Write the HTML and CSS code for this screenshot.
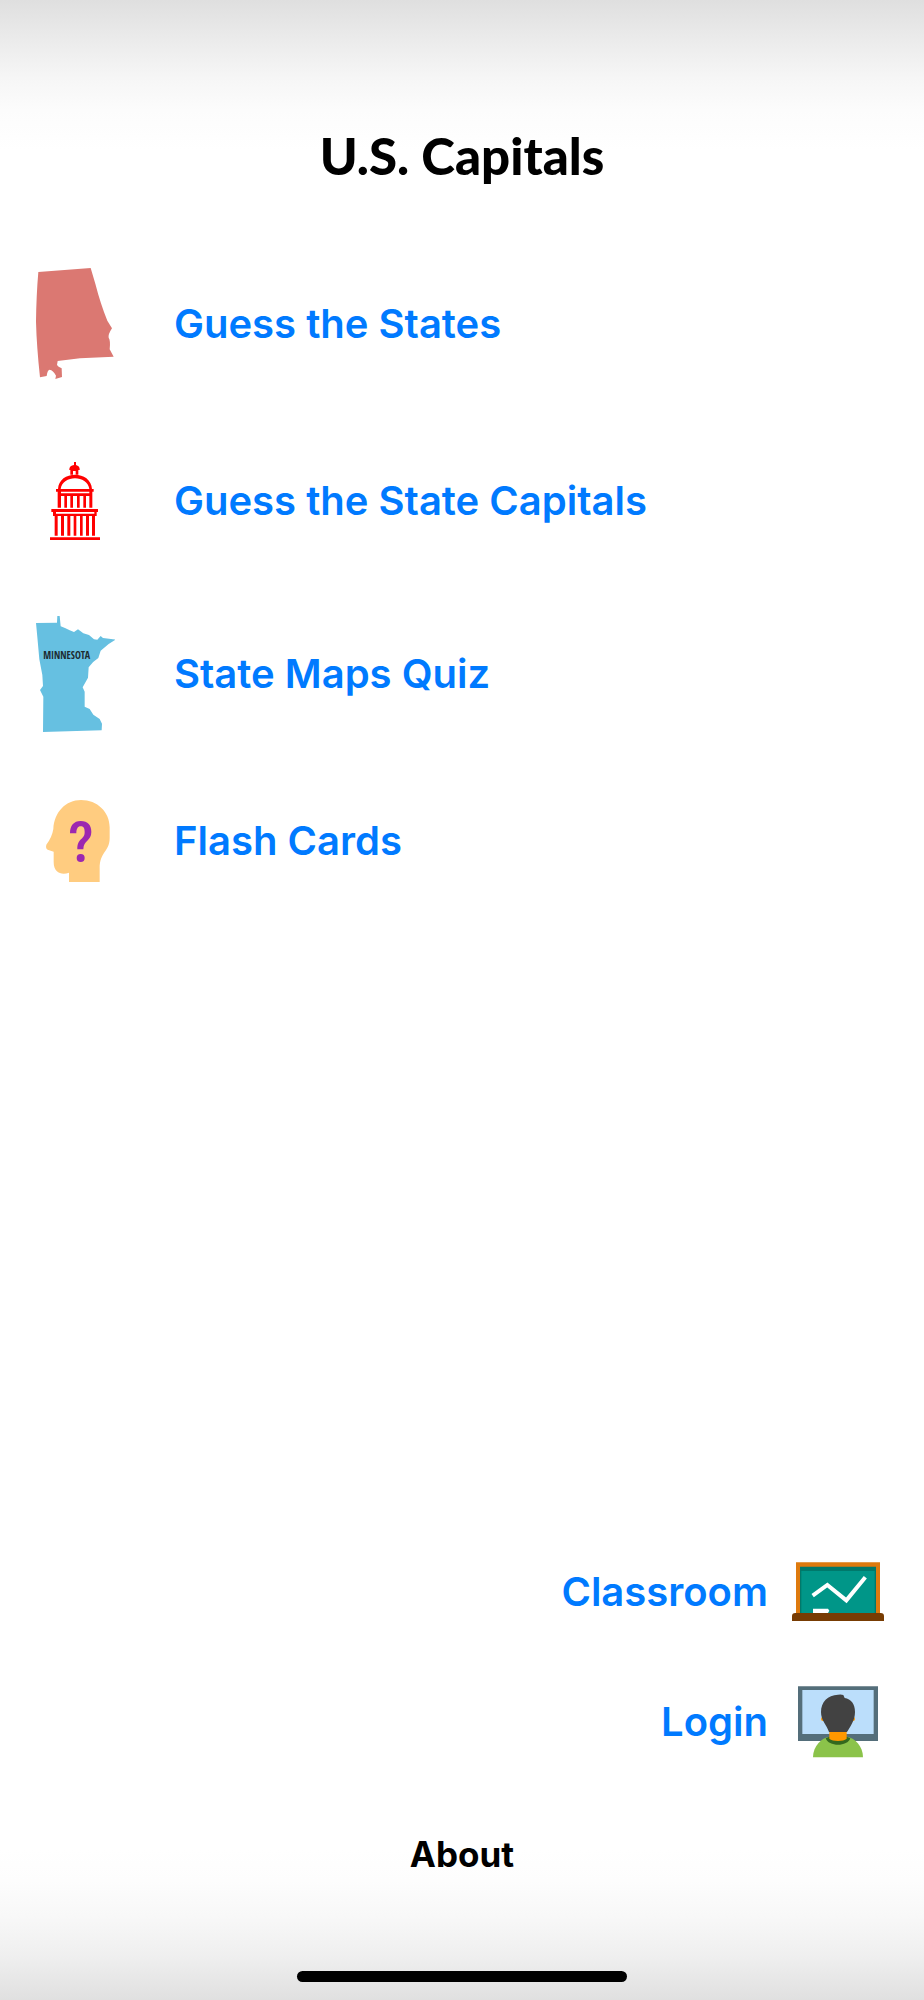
FILE: index.html
```html
<!DOCTYPE html>
<html lang="en">
<head>
<meta charset="utf-8">
<meta name="viewport" content="width=device-width, initial-scale=1">
<title>U.S. Capitals</title>
<link rel="stylesheet" href="styles.css">
</head>
<body>
<div class="screen">
  <h1 class="title">U.S. Capitals</h1>

  <nav class="games" aria-label="Games">
    <a class="game" href="#states">
      <svg class="icon" width="80" height="126" viewBox="45 33 240 378" aria-hidden="true">
        <path fill="#db7872" d="M55 66L212 54L226 101Q242 163 262 212L276 235Q264 253 266 263Q272 272 269 298L281 320L180 325L113 333L111 345Q114 351 125 355L126 381L106 387L108 377Q99 360 89 359Q82 360 80 378L60 382Q50 290 48 215Q49 135 55 66Z"/>
      </svg>
      <span>Guess the States</span>
    </a>
    <a class="game" href="#capitals">
      <svg class="icon" width="80" height="120" viewBox="15 -27 240 360" aria-hidden="true">
        <g fill="#f00">
          <path d="M132 36h6v9q11 3 11 12v3h-4v14h-8v-11h-8v11h-8V60h-3v-3q1-10 14-12z"/>
          <path fill-rule="evenodd" d="M84 118C86 60 184 60 186 118ZM92 117H178C172 74 98 74 92 117Z"/>
          <path d="M78 117h113v8h-4v48h-9v-35h-10v35h-8v-35h-11v35h-8v-35h-12v35h-8v-35h-10v35h-8v-35H93v35H83v-48h-5zM93 125v5h85v-5z" fill-rule="evenodd"/>
          <path d="M64 177h140v9h-4v12h-5v59h-9v-59h-9v59h-9v-59h-10v59h-8v-59h-11v59h-8v-59h-10v59h-9v-59h-10v59h-9v-59h-10v59h-9v-59h-5v-12h-5zM78 186v5h115v-5z" fill-rule="evenodd"/>
          <path d="M60 262h150v8H60z"/>
        </g>
      </svg>
      <span>Guess the State Capitals</span>
    </a>
    <a class="game" href="#maps">
      <svg class="icon" width="80" height="118" viewBox="45 45 240 354" aria-hidden="true">
        <path fill="#66c0e1" d="M48 69L111 68L112 48H119L122 79L135 84L149 91L162 96L174 88L190 100L207 105L222 118L232 119L242 108L249 114L287 119Q265 130 242 152L235 174Q216 186 206 202L204 233L188 262L194 275L194 320L209 327L220 344L239 357L246 371L245 391L69 396L70 290L60 270L69 258L67 225L58 178Q52 110 48 69Z"/>
        <text class="map-label" x="140" y="176" text-anchor="middle">MINNESOTA</text>
      </svg>
      <span>State Maps Quiz</span>
    </a>
    <a class="game" href="#cards">
      <svg class="icon" width="80" height="108" viewBox="15 -9 240 324" aria-hidden="true">
        <path fill="#ffcc80" d="M153 30C202 30 239 66 239 112V144C239 185 209 185 209 235V276H117V248C97 256 71 250 71 216V185L53 179Q46 175 49 164Q66 142 70 117C73 66 107 30 153 30Z"/>
        <path fill="#9c27b0" d="M120 130C120 107 131 93 152 93C174 93 184 106 184 126C184 153 160 151 160 178H142C142 142 164 151 164 126C164 114 160 109 152 109C143 109 139 117 139 130Z"/>
        <circle cx="152" cy="204" r="12" fill="#9c27b0"/>
      </svg>
      <span>Flash Cards</span>
    </a>
  </nav>

  <nav class="account" aria-label="Account">
    <a class="account-link" href="#classroom">
      <span>Classroom</span>
      <svg class="icon" width="96" height="64" viewBox="30 30 288 192" aria-hidden="true">
        <path fill="#de7a0e" d="M48 37H300V192H48Z"/>
        <path fill="#00796b" d="M60 50H288V190H60Z"/>
        <path fill="#009688" d="M64 63H284V190H64Z"/>
        <path fill="none" stroke="#fff" stroke-width="12" d="M98 137L142 105L199 151L256 82"/>
        <path fill="#fff" d="M99 176H144L148 182L144 189H99Z"/>
        <path fill="#783c03" d="M36 213V198Q36 189 46 189H302Q312 189 312 198V213Z"/>
      </svg>
    </a>
    <a class="account-link" href="#login">
      <span>Login</span>
      <svg class="icon" width="96" height="80" viewBox="30 36 288 240" aria-hidden="true">
        <path fill="#546e7a" d="M54 49H294V213H54Z"/>
        <path fill="#bbdefb" d="M67 60H281V192H67Z"/>
        <path fill="#8bc34a" d="M99 262C99 228 125 203 148 200H200C224 203 249 228 249 262Z"/>
        <path fill="#33691e" d="M137 205L148 200H200L211 205C203 231 145 231 137 205Z"/>
        <path fill="#ff9800" d="M148 184H200V206C190 215 158 215 148 206Z"/>
        <circle cx="129" cy="147" r="6" fill="#ff9800"/>
        <circle cx="219" cy="147" r="6" fill="#ff9800"/>
        <path fill="#424242" d="M174 74Q186 73 190 75L194 84C213 87 225 101 225 126C225 151 211 170 201 186H147C140 165 123 151 123 126C123 96 143 75 174 74Z"/>
      </svg>
    </a>
  </nav>

  <footer class="footer">
    <a class="about" href="#about">About</a>
    <div class="home-indicator"></div>
  </footer>
</div>
</body>
</html>
```
FILE: styles.css
```css
* {
  box-sizing: border-box;
}

body {
  margin: 0;
  font-family: Inter, "Liberation Sans", sans-serif;
  font-weight: 600;
  background: #fff;
}

a {
  color: #007aff;
  text-decoration: none;
}

.screen {
  min-height: 100vh;
  display: flex;
  flex-direction: column;
  padding: 120px 35px 18px;
  background:
    linear-gradient(to bottom, #dfdfdf 0, #ebebeb 40px, #f6f6f6 78px, #fcfcfc 110px, #fff 150px, transparent 150px),
    linear-gradient(to top, #e0e0e0 0, #efefef 44px, #f8f8f8 84px, #fdfdfd 120px, #fff 150px);
}

.title {
  margin: 0;
  font-family: Lato, "Open Sans", sans-serif;
  font-size: 51px;
  font-weight: 900;
  line-height: 72px;
  text-align: center;
  color: #000;
}

.games {
  display: flex;
  flex-direction: column;
  align-items: flex-start;
  gap: 54px;
  margin-top: 69px;
}

.game {
  display: flex;
  align-items: center;
  gap: 59px;
  font-size: 40px;
  line-height: 48px;
}

.icon {
  display: block;
  flex: none;
}

.map-label {
  font-family: "Open Sans Condensed", "DejaVu Sans Condensed", sans-serif;
  font-size: 30px;
  font-weight: 400;
  fill: #1c2b31;
}

.account {
  display: flex;
  flex-direction: column;
  align-items: flex-end;
  gap: 58px;
  margin-top: auto;
  padding-right: 3px;
}

.account-link {
  display: flex;
  align-items: center;
  gap: 22px;
  font-size: 40px;
  line-height: 48px;
}

.footer {
  display: flex;
  flex-direction: column;
  align-items: center;
  gap: 93px;
  margin-top: 68px;
}

.about {
  font-size: 35px;
  font-weight: 700;
  line-height: 48px;
  color: #000;
}

.home-indicator {
  width: 100%;
  max-width: 330px;
  height: 11px;
  border-radius: 6px;
  background: #000;
}
```
